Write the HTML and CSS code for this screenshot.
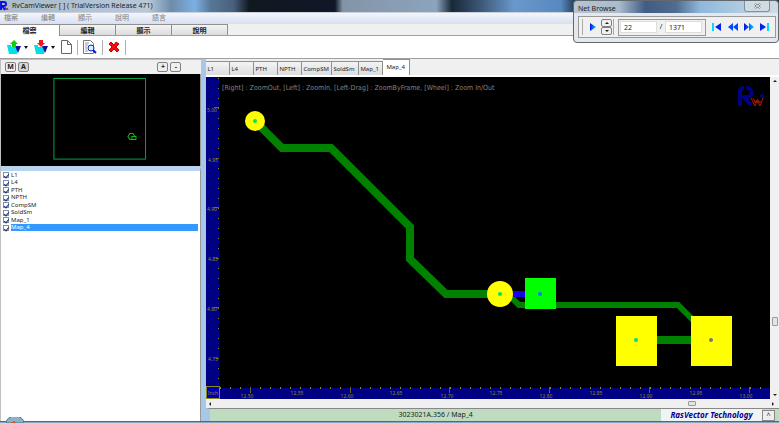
FILE: index.html
```html
<!DOCTYPE html>
<html lang="zh-Hant">
<head>
<meta charset="UTF-8">
<meta name="viewport" content="width=device-width, initial-scale=1.0">
<title>RvCamViewer</title>
<link rel="stylesheet" href="styles.css">
</head>
<body>

<header class="titlebar">
    <svg class="app-icon" viewBox="0 0 9 10"><path d="M1 9V1h3a2 2 0 0 1 0 4H2l3 4" fill="none" stroke="#1010e0" stroke-width="2"/><path d="M5 6l1 3 1-2 1 2" fill="none" stroke="#e01010"/></svg>
    <span>RvCamViewer [ ] ( TrialVersion Release 471)</span>
</header>

<nav class="menubar">
    <a href="#">檔案</a>
    <a href="#">編輯</a>
    <a href="#">顯示</a>
    <a href="#">說明</a>
    <a href="#">語言</a>
</nav>

<div class="ribbon-tabs">
    <button class="ribbon-tab active">檔案</button>
    <button class="ribbon-tab">編輯</button>
    <button class="ribbon-tab">顯示</button>
    <button class="ribbon-tab">說明</button>
</div>

<div class="toolbar">
    <button class="tool" aria-label="Open">
        <svg width="14" height="14" viewBox="0 0 14 14"><path d="M0 5h4v2h7l-1 7H2z" fill="#00e0e8"/><path d="M8 6h6l-3 7z" fill="#1010a0"/><path d="M7 0l4 4H9v3H5V4H3z" fill="#10d010"/></svg>
    </button>
    <button class="drop" aria-label="Open recent"></button>
    <button class="tool" aria-label="Import">
        <svg width="14" height="14" viewBox="0 0 14 14"><path d="M0 5h4v2h7l-1 7H2z" fill="#00e0e8"/><path d="M8 6h6l-3 7z" fill="#1010a0"/><path d="M7 7l4-4H9V0H5v3H3z" fill="#f01818"/></svg>
    </button>
    <button class="drop" aria-label="Import options"></button>
    <button class="tool" aria-label="New">
        <svg width="11" height="14" viewBox="0 0 11 14"><path d="M.5.5h6l4 4v9H.5zM6.500.5v4h4" fill="#fff" stroke="#666"/></svg>
    </button>
    <span class="rule"></span>
    <button class="tool" aria-label="Preview">
        <svg width="14" height="14" viewBox="0 0 14 14"><path d="M.5.500h7l3 3v10H.5z" fill="#fff" stroke="#777"/><path d="M2 3h4M2 5h3M2 7h2M2 9h2M2 11h3" stroke="#999"/><circle cx="8" cy="8" r="3" fill="#ccf4ff" stroke="#1818c0"/><path d="M10 10l3 3" stroke="#1818c0" stroke-width="2"/></svg>
    </button>
    <span class="rule"></span>
    <button class="tool" aria-label="Close file">
        <svg width="12" height="12" viewBox="0 0 12 12"><path d="M1 3l2-2 3 3 2-3 3 2-3 3 3 3-2 2-3-3-3 3-2-2 3-3z" fill="#f01010" stroke="#c00"/></svg>
    </button>
    <span class="rule"></span>
</div>

<main class="workspace">
    <aside class="side">
        <div class="side-head">
            <button class="mini">M</button>
            <button class="mini pressed">A</button>
            <button class="mini zoom-in">+</button>
            <button class="mini">-</button>
        </div>
        <svg class="overview" viewBox="0 0 198 91">
            <rect x="52.500" y="4.500" width="91" height="80" fill="none" stroke="#00a048"/>
            <path d="M132 65h-4l-2-3 2-3h3l2 3M130 62h4v3h-4z" fill="none" stroke="#00c800"/>
        </svg>
        <div class="layers">
            <div class="layer-list">
                <label><input type="checkbox" checked><span>L1</span></label>
                <label><input type="checkbox" checked><span>L4</span></label>
                <label><input type="checkbox" checked><span>PTH</span></label>
                <label><input type="checkbox" checked><span>NPTH</span></label>
                <label><input type="checkbox" checked><span>CompSM</span></label>
                <label><input type="checkbox" checked><span>SoldSm</span></label>
                <label><input type="checkbox" checked><span>Map_1</span></label>
                <label class="selected"><input type="checkbox" checked><span>Map_4</span></label>
            </div>
        </div>
    </aside>

    <section class="viewer">
        <div class="layer-tabs">
            <button class="layer-tab">L1</button>
            <button class="layer-tab">L4</button>
            <button class="layer-tab">PTH</button>
            <button class="layer-tab">NPTH</button>
            <button class="layer-tab wide">CompSM</button>
            <button class="layer-tab medium">SoldSm</button>
            <button class="layer-tab">Map_1</button>
            <button class="layer-tab medium active">Map_4</button>
        </div>
        <div class="stage">
            <svg class="board" viewBox="0 0 564 322" preserveAspectRatio="xMinYMin slice">
                <defs>
                    <pattern id="tickX" x="44" y="310" width="10" height="12" patternUnits="userSpaceOnUse"><path d="M.5 0v2" stroke="#8a8a20"/></pattern>
                    <pattern id="tickY" x="0" y="31" width="13" height="10" patternUnits="userSpaceOnUse"><path d="M12 .5h1" stroke="#8a8a20"/></pattern>
                </defs>
                <rect width="564" height="322" fill="#000"/>

                <!-- rulers -->
                <rect width="13" height="322" fill="#000084"/>
                <rect y="311" width="564" height="11" fill="#000084"/>
                <rect width="13" height="310" fill="url(#tickY)"/>
                <rect x="14" y="310" width="550" height="12" fill="url(#tickX)"/>
                <path d="M44.500 310v6M144.500 310v6M243.500 310v6M343.500 310v6M443.500 310v6M543.500 310v6M8 30.500h5M8 130.500h5M8 230.500h5M10 81.500h3M10 181.500h3M10 281.500h3" stroke="#66662a"/>
                <rect x=".5" y="309.500" width="13" height="12" fill="#0000b8" stroke="#8a8a20"/>
                <g class="scale">
                    <text x="7" y="318">Inch</text>
                    <text x="41" y="321">12.50</text>
                    <text x="91" y="318">12.55</text>
                    <text x="141" y="321">12.60</text>
                    <text x="190" y="318">12.65</text>
                    <text x="241" y="321">12.70</text>
                    <text x="290" y="318">12.75</text>
                    <text x="340" y="321">12.80</text>
                    <text x="390" y="318">12.85</text>
                    <text x="440" y="321">12.90</text>
                    <text x="490" y="318">12.95</text>
                    <text x="540" y="321">13.00</text>
                    <text x="6" y="35">5.00</text>
                    <text x="7" y="85">4.95</text>
                    <text x="6" y="134">4.90</text>
                    <text x="7" y="184">4.85</text>
                    <text x="6" y="234">4.80</text>
                    <text x="7" y="284">4.75</text>
                </g>

                <!-- traces -->
                <g fill="none" stroke="#008200">
                    <path d="M49 44l27 27h49l79 79v32l36 35h54" stroke-width="8"/>
                    <path d="M300 215l13 13h159l34 34" stroke-width="6"/>
                    <path d="M430 263h75" stroke-width="8"/>
                    <path d="M294 217h40" stroke="#1800f0" stroke-width="6"/>
                </g>

                <!-- pads -->
                <circle cx="49" cy="44" r="10" fill="#ff0"/>
                <circle cx="294" cy="217" r="13" fill="#ff0"/>
                <rect x="319" y="201" width="31" height="31" fill="#0f0"/>
                <rect x="410" y="239" width="41" height="50" fill="#ff0"/>
                <rect x="485" y="239" width="41" height="50" fill="#ff0"/>
                <g fill="#00e070">
                    <circle cx="49" cy="44" r="2"/>
                    <circle cx="294" cy="217" r="2"/>
                    <circle cx="430" cy="263" r="2"/>
                    <circle cx="334" cy="217" r="2" fill="#0070ff"/>
                    <circle cx="505" cy="263" r="2" fill="#777"/>
                </g>

                <text class="hint" x="16" y="13">[Right] : ZoomOut, [Left] : ZoomIn, [Left-Drag] : ZoomByFrame, [Wheel] : Zoom In/Out</text>

                <!-- watermark logo -->
                <path d="M534 29V14a4 4 0 0 1 4-3M540 11h1a4 4 0 0 1 0 9h-3l7 8" fill="none" stroke="#000084" stroke-width="4"/>
                <circle cx="556" cy="19" r="2" fill="#000084"/>
                <path d="M545 21l4 8 2-6 3 6 3-8M547 21l3 5M551 22l3 4M548 25h7" fill="none" stroke="#b01800"/>
            </svg>
            <div class="vscroll">
                <span class="arrow up"></span>
                <span class="thumb"></span>
                <span class="arrow down"></span>
            </div>
        </div>
        <div class="hscroll">
            <span class="arrow left"></span>
            <span class="thumb"></span>
            <span class="arrow right"></span>
        </div>
        <footer class="status">
            <span class="file">3023021A.356 / Map_4</span>
            <span class="brand">RasVector Technology</span>
            <button class="expand" aria-label="Expand">^</button>
        </footer>
    </section>
</main>

<div class="taskbar">
    <svg class="orb" viewBox="0 0 18 6"><path d="M0 6a9 7 0 0 1 18 0z" fill="#8cb0c8" stroke="#48788c"/><path d="M5 6l3-2 2 2z" fill="#d05020"/></svg>
</div>

<div class="net">
    <div class="net-title">
        <span>Net Browse</span>
        <button class="net-close" aria-label="Close">
            <svg width="7" height="6" viewBox="0 0 7 6"><path d="M1 1l5 4M6 1L1 5" stroke="#555" stroke-width="2"/><path d="M1 1l5 4M6 1L1 5" stroke="#fff"/></svg>
        </button>
    </div>
    <div class="net-body">
        <button class="nav play" aria-label="Play"><svg width="8" height="8" viewBox="0 0 8 8"><path d="M1 0l6 4-6 4z" fill="url(#blue)"/></svg></button>
        <div class="spin">
            <button aria-label="Up"><span class="arrow up"></span></button>
            <button aria-label="Down"><span class="arrow down"></span></button>
        </div>
        <div class="fields">
            <input type="text" value="22" aria-label="Net">
            <span>/</span>
            <input type="text" value="1371" aria-label="Total nets">
        </div>
        <button class="nav" aria-label="First"><svg width="10" height="8" viewBox="0 0 10 8"><path d="M0 0h2v8H0z" fill="#00d8ff"/><path d="M9 0v8L3 4z" fill="#0020f0"/></svg></button>
        <button class="nav" aria-label="Previous"><svg width="10" height="8" viewBox="0 0 10 8"><defs><linearGradient id="blue"><stop offset="0" stop-color="#0010f0"/><stop offset="1" stop-color="#00c8ff"/></linearGradient></defs><path d="M5 0v8L0 4zM10 0v8L5 4z" fill="#0048ff"/></svg></button>
        <button class="nav" aria-label="Next"><svg width="10" height="8" viewBox="0 0 10 8"><path d="M0 0l5 4-5 4zM5 0l5 4-5 4z" fill="url(#blue)"/></svg></button>
        <button class="nav" aria-label="Last"><svg width="10" height="8" viewBox="0 0 10 8"><path d="M0 0l6 4-6 4z" fill="#0020f0"/><path d="M7 0h2v8H7z" fill="#00d8ff"/></svg></button>
    </div>
</div>

</body>
</html>
```
FILE: styles.css
```css
* {
    box-sizing: border-box;
}
body {
    margin: 0;
    height: 100vh;
    display: flex;
    flex-direction: column;
    overflow: hidden;
    background: #f0f0f0;
    color: #222;
    font: 7px/10px "Noto Sans", "Noto Sans CJK TC", sans-serif;
}
button {
    margin: 0;
    padding: 0;
    border: 0;
    background: none;
    color: inherit;
    font: inherit;
}
svg {
    display: block;
}

/* window frame */
.titlebar {
    display: flex;
    align-items: center;
    gap: 3px;
    height: 13px;
    flex: none;
    border-bottom: 1px solid #c8d0dc;
    background: linear-gradient(to right, #a8bccc, #b8c8d8 19%, #6c8cac 22%, #7cb0e0 25%, #587898 27%, #48607c 30%, #101820 32%, #101828 43%, #8494a8 44%, #8ca4bc 56%, #182838 58%, #405c7c 62%, #6a98cc 66%, #5888c0 72%, #203448 74%);
}
.app-icon {
    width: 9px;
    height: 10px;
}
.menubar {
    display: flex;
    gap: 23px;
    height: 11px;
    flex: none;
    padding-left: 4px;
    background: linear-gradient(#f4f6fc, #d8dff0);
}
.menubar a {
    color: #808080;
    text-decoration: none;
}
.ribbon-tabs {
    display: flex;
    align-items: flex-end;
    height: 12px;
    flex: none;
    border-bottom: 1px solid #a0a0a0;
}
.ribbon-tab {
    width: 56px;
    height: 11px;
    border: 1px solid #909090;
    border-width: 1px 1px 0 0;
    background: linear-gradient(#f4f4f4, #dcdcdc);
    font-weight: bold;
    line-height: 9px;
}
.ribbon-tab.active {
    height: 12px;
    width: 60px;
    margin-bottom: -1px;
    background: #fff;
}
.toolbar {
    display: flex;
    align-items: center;
    gap: 5px;
    height: 23px;
    flex: none;
    padding-left: 7px;
    background: #fff;
    border-bottom: 1px solid #a0a0a0;
}
.drop {
    border: 2px solid transparent;
    border-top: 3px solid #111;
    border-bottom: 0;
    margin-left: -2px;
    margin-right: 1px;
}
.rule {
    width: 1px;
    height: 15px;
    background: #b0b0b0;
}

/* left side */
.workspace {
    display: flex;
    flex: 1;
    min-height: 0;
}
.side {
    display: flex;
    flex-direction: column;
    width: 26.5%;
    border: 1px solid #c0c0c0;
    border-width: 1px 5px 0 1px;
    border-right-color: #a8c8ea;
}
.side-head {
    display: flex;
    align-items: center;
    gap: 2px;
    height: 14px;
    flex: none;
    padding: 0 20px 0 4px;
}
.mini {
    width: 11px;
    height: 10px;
    border: 1px solid #808080;
    border-radius: 2px;
    background: #eee;
    font-weight: bold;
    line-height: 8px;
}
.mini.pressed {
    background: #d4d4d4;
}
.mini.zoom-in {
    margin-left: auto;
}
.overview {
    width: 100%;
    flex: none;
    background: #000;
    border-right: 1px solid #999;
}
.layers {
    flex: 1;
    padding: 1px 2px;
    border-top: 5px solid #b8d4ee;
    border-right: 1px solid #999;
    background: #fff;
}
.layer-list {
    display: grid;
    grid-auto-rows: 1fr;
    height: 60px;
}
.layers label {
    display: flex;
    align-items: center;
    gap: 2px;
}
.layers span {
    flex: 1;
    line-height: 7px;
    font-size: 6px;
}
.layers .selected span {
    background: #3399ff;
    color: #fff;
}
.layers input {
    display: flex;
    justify-content: center;
    appearance: none;
    width: 6px;
    height: 6px;
    margin: 0;
    border: 1px solid #8090a0;
    background: #fff;
}
.layers input:checked::before {
    content: "";
    width: 2px;
    height: 4px;
    border: solid #203080;
    border-width: 0 1px 1px 0;
    transform: rotate(40deg);
}

/* viewer */
.viewer {
    display: flex;
    flex-direction: column;
    flex: 1;
    min-width: 0;
}
.layer-tabs {
    display: flex;
    align-items: flex-end;
    height: 18px;
    flex: none;
    border-bottom: 2px solid #fff;
}
.layer-tab {
    width: 24px;
    height: 14px;
    padding-left: 1px;
    border: 1px solid #909090;
    border-width: 1px 1px 0 0;
    background: linear-gradient(#f4f4f4, #dcdcdc);
    font-size: 6px;
    text-align: left;
}
.layer-tab.medium {
    width: 27px;
}
.layer-tab.wide {
    width: 30px;
}
.layer-tab.active {
    height: 16px;
    padding: 0 0 1px 3px;
    background: #fff;
}
.stage {
    display: flex;
    flex: 1;
    min-height: 0;
}
.board {
    flex: 1;
    min-width: 0;
    height: 100%;
    background: #000;
}
.scale {
    fill: #8a8a30;
    font-size: 5px;
    text-anchor: middle;
}
.hint {
    fill: #808080;
    font-family: "DejaVu Sans Condensed", "DejaVu Sans", sans-serif;
    font-size: 7px;
}
.vscroll, .hscroll {
    display: flex;
    align-items: center;
    flex: none;
    background: #f0f0f0;
}
.vscroll {
    flex-direction: column;
    width: 9px;
    padding: 3px 0;
}
.hscroll {
    height: 9px;
    padding: 0 5px 0 3px;
}
.thumb {
    width: 8px;
    height: 5px;
    border: 1px solid #999;
    border-radius: 1px;
    background: #e4e4e4;
}
.vscroll .thumb {
    width: 6px;
    height: 9px;
    margin-top: auto;
    margin-bottom: 68px;
}
.hscroll .thumb {
    margin-left: auto;
    margin-right: 76px;
}
.arrow {
    width: 0;
    height: 0;
    border: 2px solid transparent;
}
.arrow.up {
    border-top: 0;
    border-bottom-color: #222;
}
.arrow.down {
    border-bottom: 0;
    border-top-color: #222;
}
.arrow.left {
    border-left: 0;
    border-right-color: #222;
}
.arrow.right {
    border-right: 0;
    border-left-color: #222;
}
.status {
    display: flex;
    align-items: center;
    height: 13px;
    flex: none;
    border-top: 1px solid #888;
    border-left: 4px solid #a8c8ea;
    background: #c0dcc0;
}
.file {
    flex: 1;
    text-align: center;
}
.brand {
    width: 101px;
    height: 12px;
    background: #f0f4f4;
    color: #000090;
    font-size: 8px;
    font-weight: bold;
    font-style: italic;
    line-height: 12px;
    text-align: center;
}
.expand {
    width: 13px;
    height: 11px;
    margin-right: 4px;
    border: 1px solid #888;
    background: #eee;
}
.taskbar {
    height: 2px;
    flex: none;
    position: relative;
    background: #8ca8c0;
    border-top: 1px solid #506880;
}
.orb {
    position: absolute;
    left: 6px;
    bottom: 0;
    width: 18px;
    height: 6px;
}

/* floating net window */
.net {
    position: absolute;
    top: 0;
    right: 0;
    width: 206px;
    padding: 0 2px 4px 4px;
    border: 1px solid #606870;
    border-radius: 4px;
    background: linear-gradient(to right, #b8c4d0, #a8bccc 22%, #405c84 35%, #506c90 50%, #90b8dc 62%, #a8c8e0 78%, #d0dce4) 0 0 / 100% 12px no-repeat, #e4e8ec;
}
.net-title {
    display: flex;
    justify-content: space-between;
    height: 15px;
    line-height: 15px;
}
.net-close {
    display: flex;
    align-items: center;
    justify-content: center;
    width: 26px;
    height: 11px;
    margin-right: 6px;
    border: 1px solid #8090a0;
    border-top: 0;
    border-radius: 0 0 3px 3px;
    background: #d0dce4;
}
.net-body {
    display: flex;
    align-items: center;
    gap: 6px;
    height: 22px;
    padding: 0 5px 0 3px;
    border: 1px solid #999;
    background: #f0f0f0;
}
.nav.play {
    padding-left: 6px;
    margin-right: -2px;
    border-left: 1px solid #aaa;
    height: 16px;
}
.spin {
    display: flex;
    flex-direction: column;
    padding-right: 1px;
    border-right: 1px solid #aaa;
}
.spin button {
    display: flex;
    align-items: center;
    justify-content: center;
    width: 11px;
    height: 8px;
    border: 1px solid #808080;
    border-radius: 2px;
}
.fields {
    display: flex;
    align-items: center;
    justify-content: space-between;
    flex: 1;
    height: 17px;
    padding: 0 3px 0 1px;
    margin-left: -2px;
    border: 1px solid #999;
}
.fields input {
    width: 37px;
    height: 12px;
    padding: 0 3px;
    border: 1px solid #ddd;
    background: #fff;
    color: #222;
    font: inherit;
}
```
